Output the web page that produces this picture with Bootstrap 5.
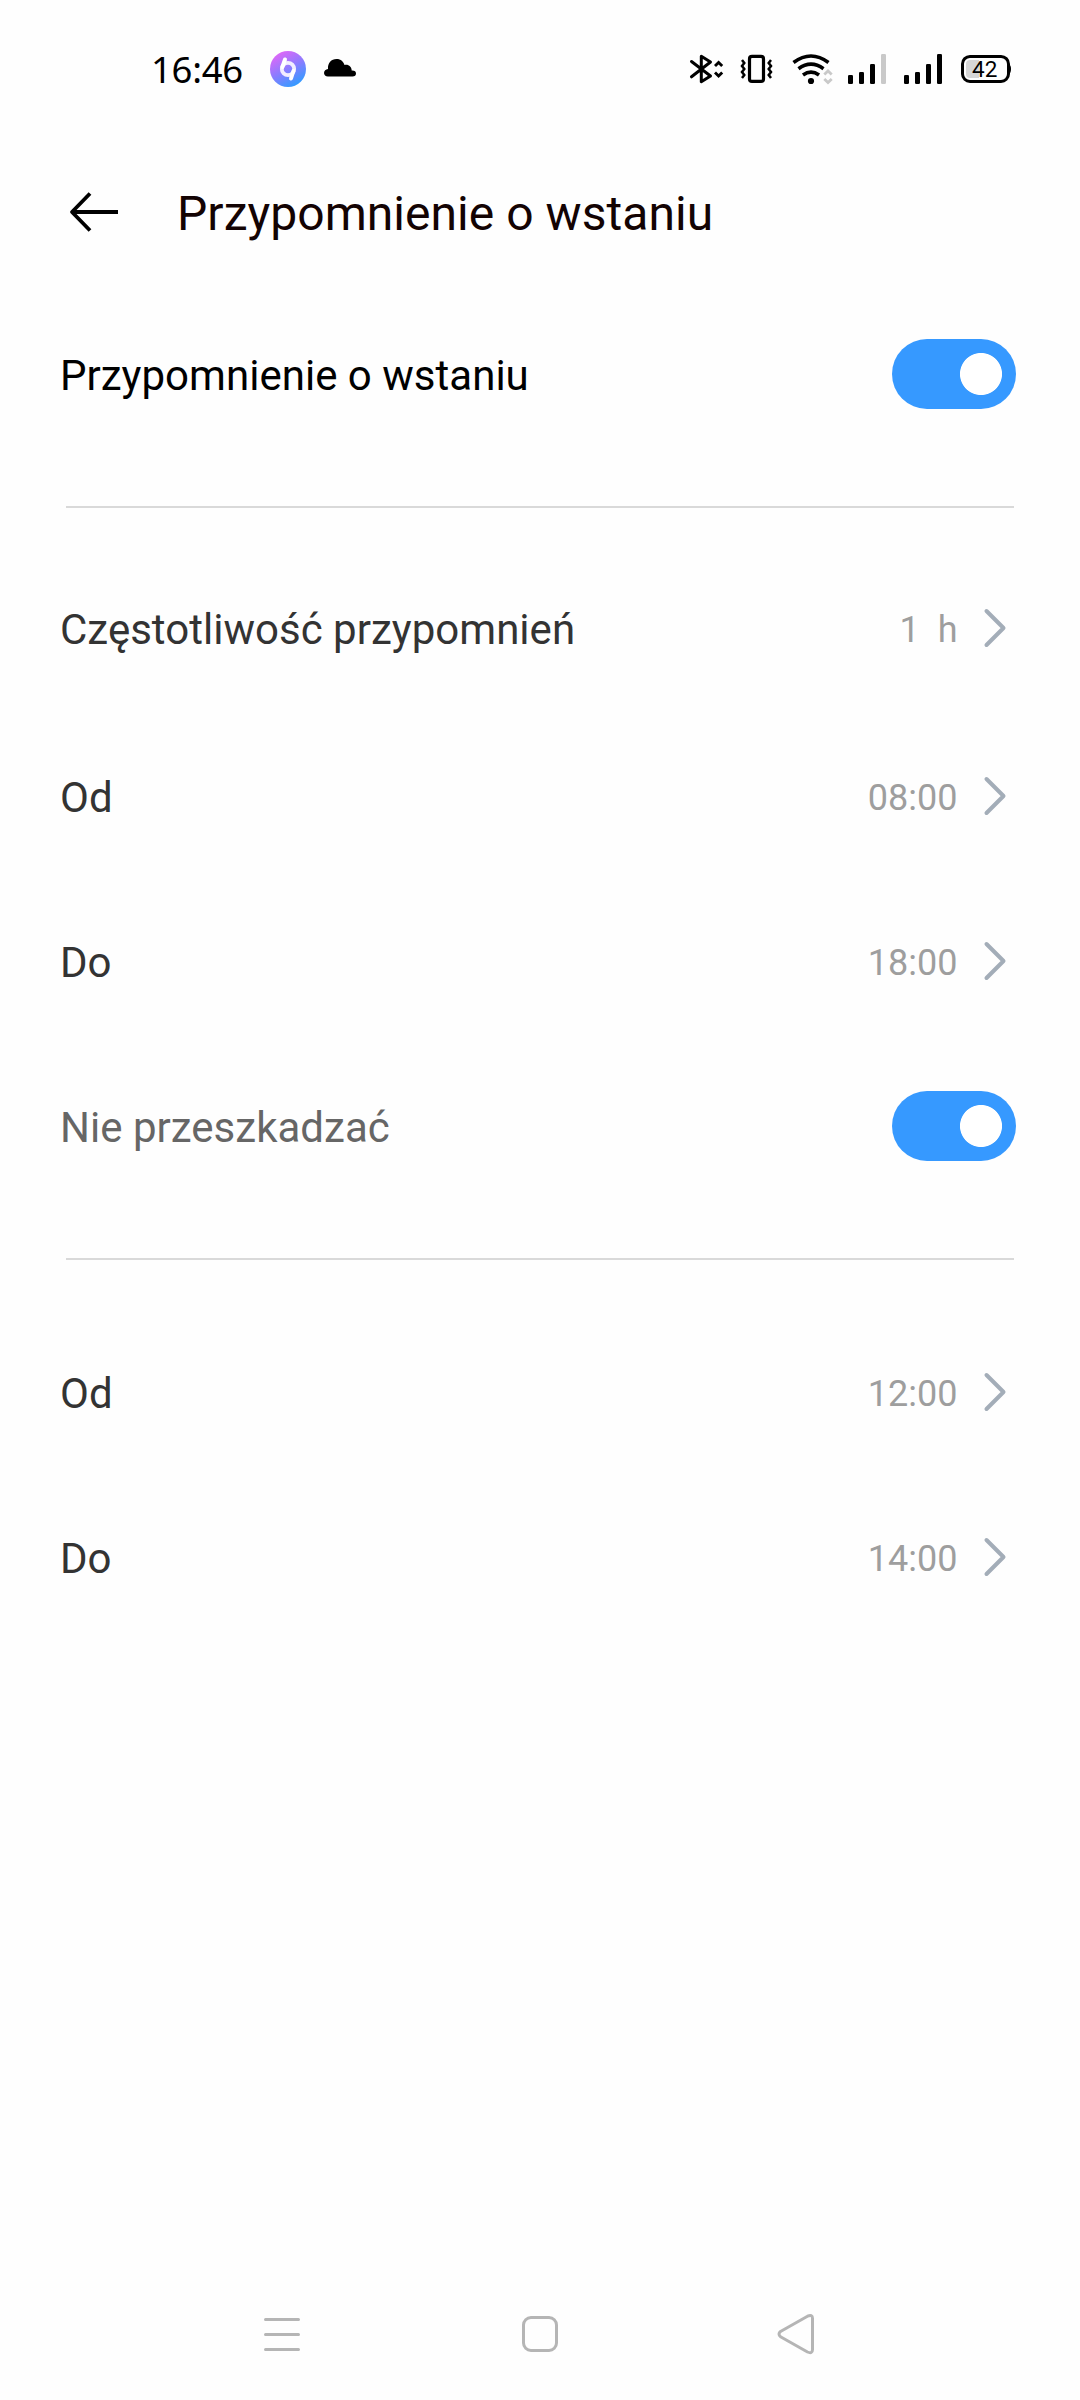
<!DOCTYPE html>
<html lang="pl">
<head>
<meta charset="utf-8">
<meta name="viewport" content="width=device-width, initial-scale=1">
<title>Przypomnienie o wstaniu</title>
<link href="https://cdn.jsdelivr.net/npm/bootstrap@5.3.0/dist/css/bootstrap.min.css" rel="stylesheet">
<style>
body{background:#fefefe;font-family:Roboto,"Noto Sans",sans-serif;color:#333}
svg{display:block;flex:none}
.screen{width:1080px;height:2400px;overflow:hidden}
.statusbar{height:138px;padding:0 69px 0 151px;color:#000}
.clock{font:400 36.5px/36px "Noto Sans",sans-serif;width:119px;letter-spacing:-.3px;padding-bottom:1px}
.batt text{font:400 22.5px Roboto,sans-serif}
.topbar{height:148px;padding-left:68px;gap:57px}
.topbar h1{font-size:48px;line-height:56px;font-weight:400;color:#130303;padding-top:3px;letter-spacing:.04px}
.setting{height:165px;padding:0 64px 0 60px}
.setting.main-row{height:176px;color:#000}
.setting.freq{height:168px;margin-bottom:1px}
.setting-label{font-size:42px;line-height:50px;padding-top:4px;letter-spacing:.02px}
.setting-value{font-size:36px;line-height:44px;color:#9e9e9e;padding-top:4px;margin-right:25px;white-space:pre}
.setting.freq .setting-value{padding-top:3px}
.setting .chev{margin-right:9.5px}
.form-switch .form-check-input.toggle{width:124px;height:70px;margin:0;float:none;border:0;border-radius:35px;background-color:#3699ff;background-image:radial-gradient(circle at 89px 35px,#fff 20.6px,transparent 21.4px);background-size:100% 100%;background-position:0 0}
.rule{height:2px;margin:0 66px;background:#d9d9d9;border:0;opacity:1}
.dim{color:#666}
/* space between the groups and their rules */
.gap-a{margin-top:44px}
.group-a{padding-top:36px}
.gap-b{margin-top:50px}
.group-b{padding-top:49px}
.navkeys{height:132px;padding:0 264px 0 262px}
</style>
</head>
<body>
<div class="screen d-flex flex-column">
  <header class="statusbar d-flex align-items-center">
    <span class="clock">16:46</span>
    <svg width="36" height="36" viewBox="0 0 36 36">
      <defs><linearGradient id="orb" x1=".25" y1=".05" x2=".75" y2=".95"><stop offset="0" stop-color="#dd68f8"/><stop offset=".5" stop-color="#8a7cff"/><stop offset="1" stop-color="#319cff"/></linearGradient></defs>
      <circle cx="18" cy="18" r="18" fill="url(#orb)"/>
      <circle cx="18" cy="18" r="6.2" fill="none" stroke="#f1edff" stroke-width="3.8"/>
      <path d="M15 8.500 12.400 16M23.400 20 21 27.500" stroke="#fff" stroke-width="4" stroke-linecap="round"/>
    </svg>
    <svg class="ms-3" width="36" height="36" viewBox="322 51 36 36"><path d="M328 76.400C325.500 76.400 324 74.800 324 72.900 324 70.800 325.800 69.200 328 69 327.500 63 331.300 59 336.500 59 341 59 343.500 61.700 344.500 65 348.500 64 351.700 66.800 351.700 70.600 354.600 70.400 356 71.800 356 73.500 356 75.400 354.800 76.400 352.500 76.400Z"/></svg>
    <div class="d-flex align-items-center ms-auto">
      <svg width="323" height="36" viewBox="688 51 323 36" fill="none" stroke="#000">
        <path d="M691.500 61.500 710.500 76 701.300 81.700V56.300L710.500 62 691.500 76.800" stroke-width="3" stroke-linejoin="round" stroke-linecap="round"/>
        <path d="M715 66 718.600 62.500 722.200 66M715 72.500 718.600 76 722.200 72.500" stroke-width="2.900"/>
        <rect x="749.500" y="56.400" width="14" height="25" rx="2.500" stroke-width="3.200"/>
        <path d="M742 60 744.300 63 742 66 744.300 69 742 72 744.300 75 742 78M771 60 768.700 63 771 66 768.700 69 771 72 768.700 75 771 78" stroke-width="2.500"/>
        <path d="M793.500 62.500Q811 49.500 828.500 62.500M798.500 68.700Q811 59.500 823.500 68.700M803 75Q811 69.300 819 75" stroke-width="3.600"/>
        <circle cx="811" cy="81" r="3.100" fill="#000" stroke="none"/>
        <path d="M824.300 74.500 828 71 831.700 74.500M824.300 79 828 82.500 831.700 79" stroke="#c9c9c9" stroke-width="2.800"/>
        <g fill="#000" stroke="none">
          <rect x="848" y="75" width="5" height="9" rx="1.300"/><rect x="859" y="72" width="5" height="12" rx="1.300"/><rect x="870" y="64" width="5" height="20" rx="1.300"/><rect x="881" y="54" width="5" height="30" rx="1.300" fill="#c9c9c9"/>
          <rect x="904" y="75" width="5" height="9" rx="1.300"/><rect x="915" y="72" width="5" height="12" rx="1.300"/><rect x="926" y="64" width="5" height="20" rx="1.300"/><rect x="937" y="54" width="5" height="30" rx="1.300"/>
        </g>
        <rect x="962.500" y="56.400" width="46" height="25" rx="7.500" stroke-width="3"/>
        <path d="M1009 64.500Q1011 65 1011 69 1011 73 1009 74Z" fill="#000" stroke="none"/>
        <path d="M979 60V78H970Q966 78 966 74V64Q966 60 970 60Z" fill="#d6d6d6" stroke="none"/>
        <g class="batt" fill="#000" stroke="none"><text x="972" y="77" textLength="25.500">42</text></g>
      </svg>
    </div>
  </header>

  <div class="topbar d-flex align-items-center">
    <svg width="52" height="44" viewBox="68 190 52 44" fill="none" stroke="#000" stroke-width="3.800"><path d="M118 212H72M90 193.500 72 212 90 230.500" stroke-linejoin="round"/></svg>
    <h1 class="mb-0">Przypomnienie o wstaniu</h1>
  </div>

  <main class="flex-grow-1">
    <section>
      <div class="setting main-row d-flex align-items-center justify-content-between">
        <label class="setting-label" for="remind">Przypomnienie o wstaniu</label>
        <div class="form-switch p-0 d-flex"><input id="remind" class="form-check-input toggle" type="checkbox" role="switch" checked></div>
      </div>
      <hr class="rule gap-a">
    </section>
    <section class="group-a">
      <div class="setting freq d-flex align-items-center">
        <span class="setting-label me-auto">Częstotliwość przypomnień</span><span class="setting-value">1  h</span>
        <svg class="chev" width="24" height="40" viewBox="0 0 24 40"><path d="M3.500 3 20.500 20 3.500 37" fill="none" stroke="#a3adb8" stroke-width="4" stroke-linecap="round" stroke-linejoin="round"/></svg>
      </div>
      <div class="setting d-flex align-items-center">
        <span class="setting-label me-auto">Od</span><span class="setting-value">08:00</span>
        <svg class="chev" width="24" height="40" viewBox="0 0 24 40"><path d="M3.500 3 20.500 20 3.500 37" fill="none" stroke="#a3adb8" stroke-width="4" stroke-linecap="round" stroke-linejoin="round"/></svg>
      </div>
      <div class="setting d-flex align-items-center">
        <span class="setting-label me-auto">Do</span><span class="setting-value">18:00</span>
        <svg class="chev" width="24" height="40" viewBox="0 0 24 40"><path d="M3.500 3 20.500 20 3.500 37" fill="none" stroke="#a3adb8" stroke-width="4" stroke-linecap="round" stroke-linejoin="round"/></svg>
      </div>
      <div class="setting d-flex align-items-center justify-content-between">
        <label class="setting-label dim" for="dnd">Nie przeszkadzać</label>
        <div class="form-switch p-0 d-flex"><input id="dnd" class="form-check-input toggle" type="checkbox" role="switch" checked></div>
      </div>
      <hr class="rule gap-b">
    </section>
    <section class="group-b">
      <div class="setting d-flex align-items-center">
        <span class="setting-label me-auto">Od</span><span class="setting-value">12:00</span>
        <svg class="chev" width="24" height="40" viewBox="0 0 24 40"><path d="M3.500 3 20.500 20 3.500 37" fill="none" stroke="#a3adb8" stroke-width="4" stroke-linecap="round" stroke-linejoin="round"/></svg>
      </div>
      <div class="setting d-flex align-items-center">
        <span class="setting-label me-auto">Do</span><span class="setting-value">14:00</span>
        <svg class="chev" width="24" height="40" viewBox="0 0 24 40"><path d="M3.500 3 20.500 20 3.500 37" fill="none" stroke="#a3adb8" stroke-width="4" stroke-linecap="round" stroke-linejoin="round"/></svg>
      </div>
    </section>
  </main>

  <nav class="navkeys d-flex align-items-center justify-content-between">
    <svg width="40" height="44" viewBox="262 2312 40 44" stroke="#b5b5b5" stroke-width="3" stroke-linecap="round"><path d="M265.500 2319.500H298.500M265.500 2334.500H298.500M265.500 2349.500H298.500"/></svg>
    <svg width="40" height="44" viewBox="519 2312 40 44" fill="none" stroke="#b5b5b5" stroke-width="3"><rect x="523.500" y="2317.500" width="33" height="33" rx="7.500"/></svg>
    <svg width="40" height="44" viewBox="776 2312 40 44" fill="none" stroke="#b5b5b5" stroke-width="3"><path d="M807.500 2316.200 780.500 2331.500Q777.500 2334 780.500 2336.700L807.500 2352Q812.500 2354.200 812.500 2349.500V2318.500Q812.500 2314 807.500 2316.200Z" stroke-linejoin="round"/></svg>
  </nav>
</div>
<script src="https://cdn.jsdelivr.net/npm/bootstrap@5.3.0/dist/js/bootstrap.bundle.min.js"></script>
</body>
</html>
